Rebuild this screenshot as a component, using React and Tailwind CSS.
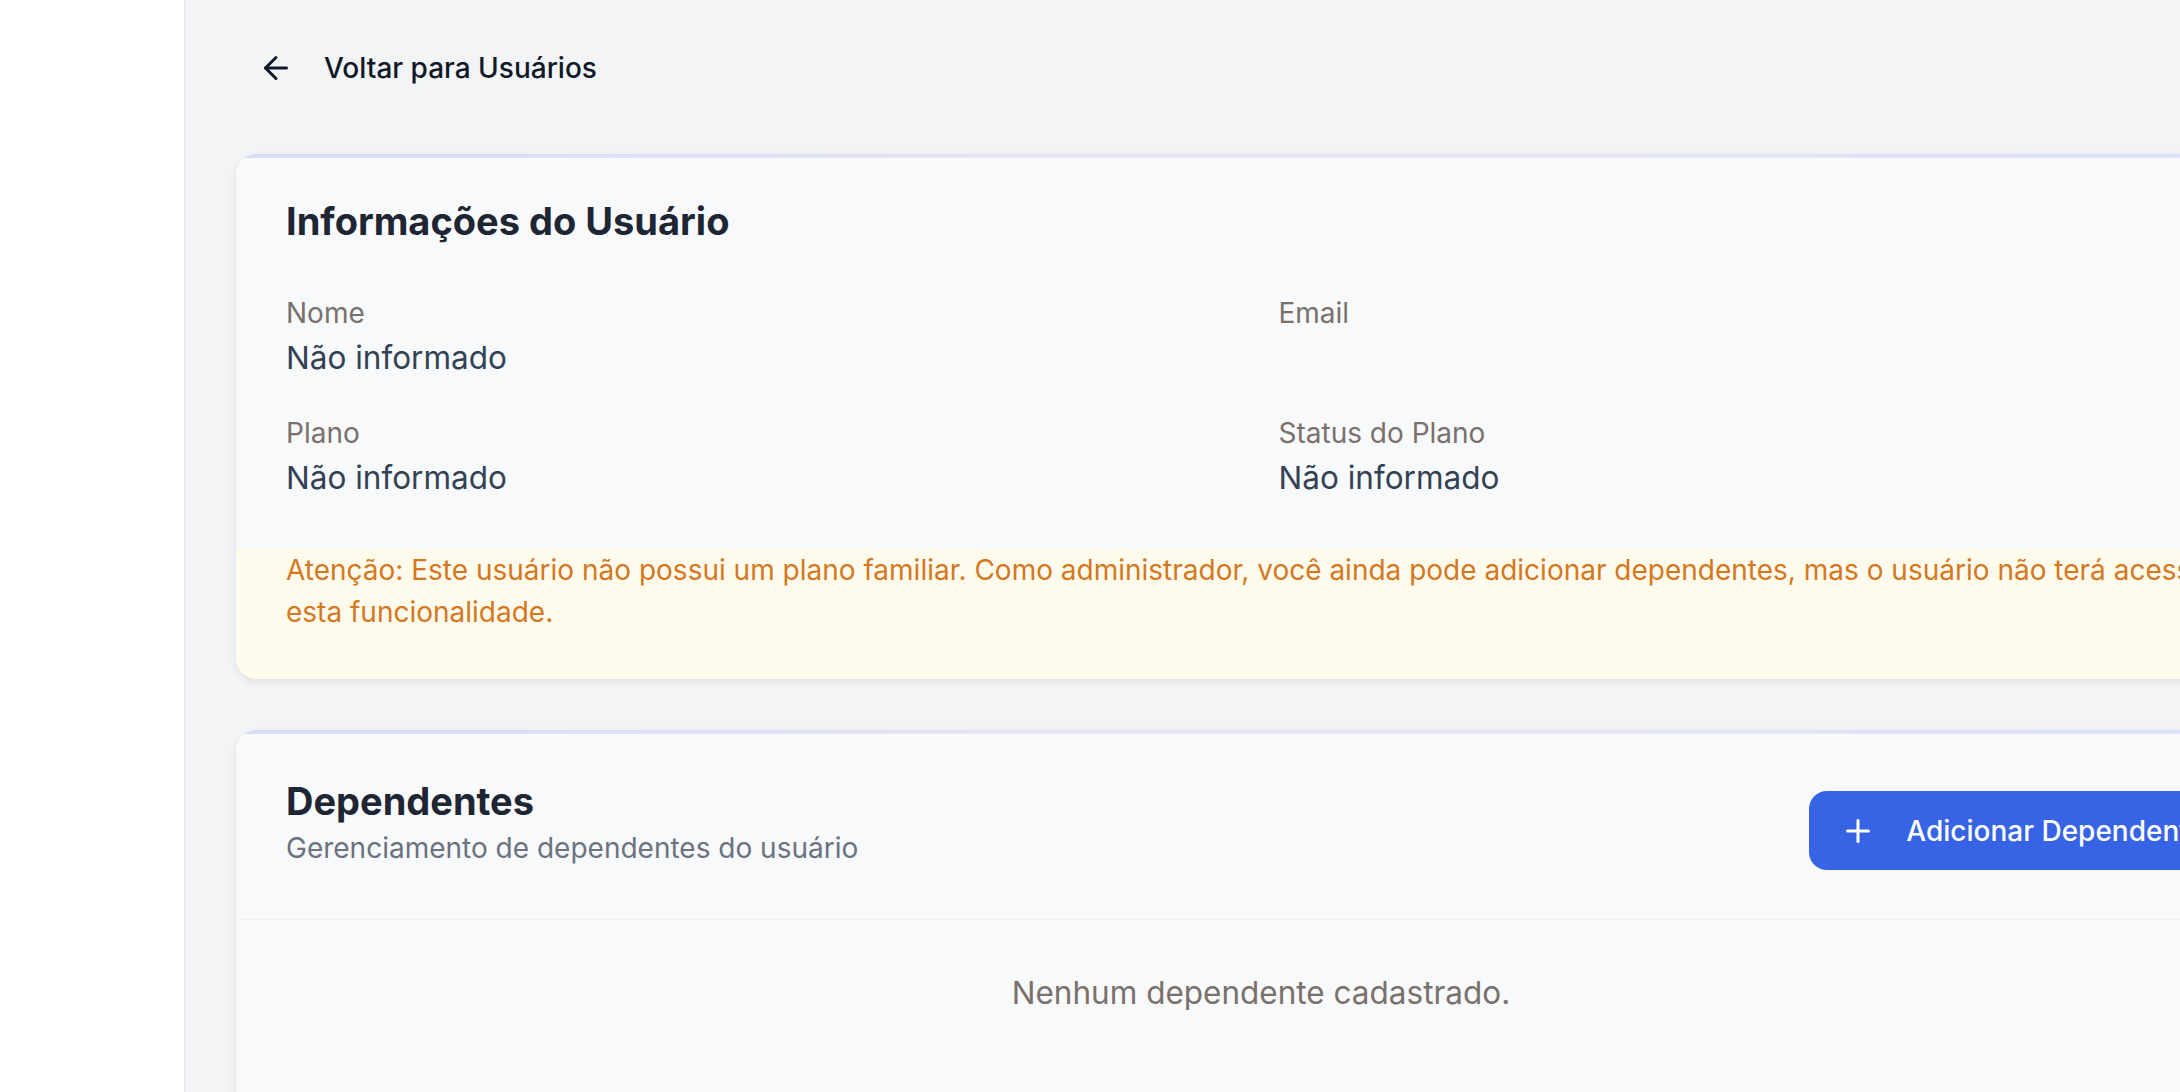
import React from "react";
import { ArrowLeft, Plus } from "lucide-react";

const user = {
  nome: "Não informado",
  email: "",
  plano: "Não informado",
  statusPlano: "Não informado",
};

function Field({ label, value }) {
  return (
    <div>
      <p className="text-[28px] leading-[36px] text-[#78716c]">{label}</p>
      <p className="mt-[5px] min-h-[44px] text-[31.5px] leading-[44px] text-[#334155]">
        {value}
      </p>
    </div>
  );
}

function Card({ children }) {
  return (
    <div className="w-[2050px] overflow-hidden rounded-[21px] bg-[#f8f9fb] shadow-[0_3px_10px_rgba(0,0,0,0.08)]">
      <div className="h-[4px] bg-gradient-to-r from-[#d5ddf6] via-[#ece5f8] to-[#d9e3f8]" />
      {children}
    </div>
  );
}

export default function App() {
  return (
    <div
      className="flex h-screen overflow-hidden bg-[#f3f4f6]"
      style={{ fontFamily: "Inter, 'Noto Sans', sans-serif" }}
    >
      {/* sidebar */}
      <aside className="w-[186px] shrink-0 border-r-2 border-[#e8eaee] bg-white" />

      <main className="w-[2150px] shrink-0 px-[50px] pt-[48px]">
        {/* back link */}
        <button className="flex h-[40px] items-center pl-[22px] text-[28px] font-medium text-[#111827]">
          <ArrowLeft size={36} strokeWidth={2} className="shrink-0" />
          <span className="ml-[30px]">Voltar para Usuários</span>
        </button>

        {/* user info */}
        <div className="mt-[66px]">
          <Card>
            <div className="px-[50px] pt-[39px] pb-[49px]">
              <h2 className="text-[38px] font-bold leading-[48px] text-[#1f2633]">
                Informações do Usuário
              </h2>
              <div className="mt-[50px] grid grid-cols-2 gap-x-[35px] gap-y-[35px]">
                <Field label="Nome" value={user.nome} />
                <Field label="Email" value={user.email} />
                <Field label="Plano" value={user.plano} />
                <Field label="Status do Plano" value={user.statusPlano} />
              </div>
            </div>
            <div className="bg-[#fefaec] px-[50px] pb-[46px]">
              <p className="text-[28px] leading-[42px] text-[#d4781f]">
                Atenção: Este usuário não possui um plano familiar. Como administrador, você ainda pode
                adicionar dependentes, mas o usuário não terá acesso a esta funcionalidade.
              </p>
            </div>
          </Card>
        </div>

        {/* dependents */}
        <div className="mt-[51px]">
          <Card>
            <div className="flex items-start justify-between border-b border-[#f0f1f4] px-[50px] pt-[43px] pb-[49px]">
              <div>
                <h2 className="text-[38px] font-bold leading-[48px] text-[#1f2633]">Dependentes</h2>
                <p className="mt-[5px] text-[28px] leading-[36px] text-[#6b7280]">
                  Gerenciamento de dependentes do usuário
                </p>
              </div>
              <button className="mt-[14px] flex h-[79px] items-center rounded-[18px] bg-[#3764e5] pl-[31px] pr-[31px] text-[28px] font-medium text-white">
                <Plus size={36} strokeWidth={2} className="shrink-0" />
                <span className="ml-[30px]">Adicionar Dependente</span>
              </button>
            </div>
            <div className="pt-[52px] pb-[120px] text-center">
              <p className="text-[31.5px] leading-[42px] text-[#78716c]">Nenhum dependente cadastrado.</p>
            </div>
          </Card>
        </div>
      </main>
    </div>
  );
}
